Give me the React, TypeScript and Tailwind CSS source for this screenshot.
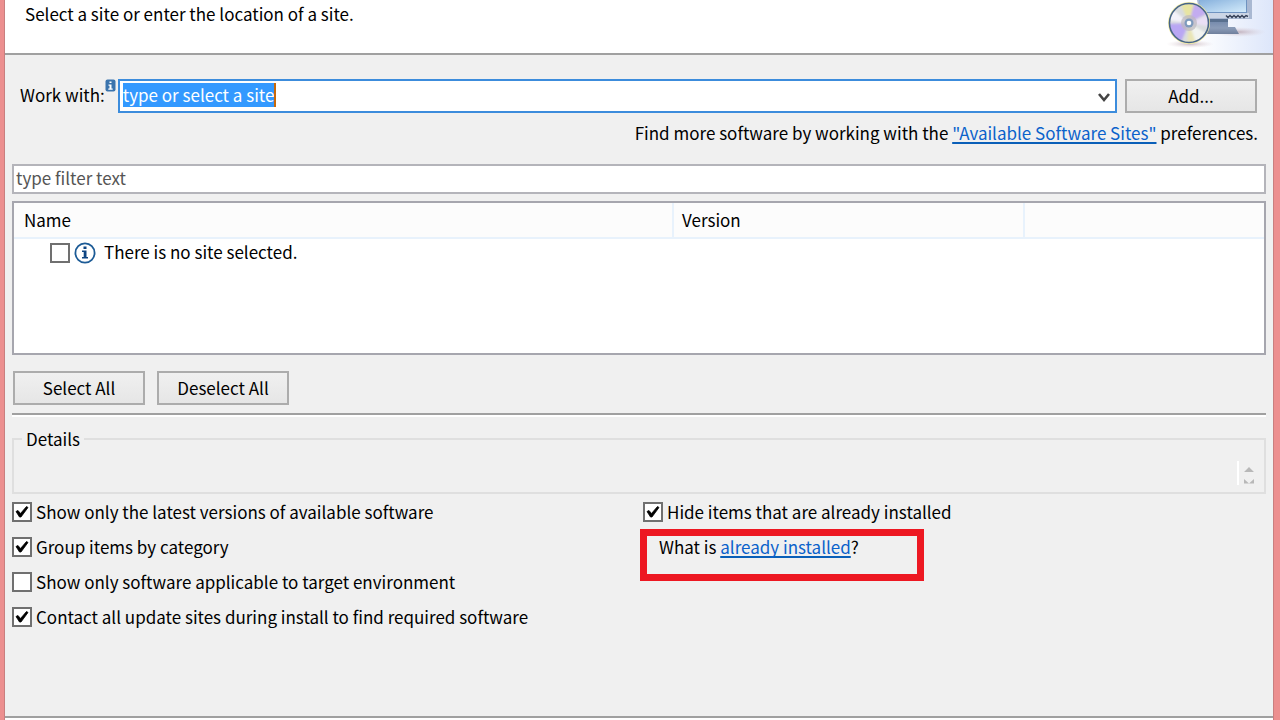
import { useEffect, useRef, useState } from "react";

interface CheckOptionProps {
  id: string;
  label: string;
  defaultChecked?: boolean;
}

const CheckBox = ({ id, defaultChecked = false, label }: CheckOptionProps) => {
  const [checked, setChecked] = useState(defaultChecked);

  return (
    <span className="relative flex h-5 w-5 shrink-0">
      <input
        id={id}
        type="checkbox"
        aria-label={label}
        checked={checked}
        onChange={(e) => setChecked(e.target.checked)}
        className="h-5 w-5 appearance-none border-2 border-[#707070] bg-white"
      />
      {checked && (
        <svg viewBox="0 0 20 20" className="pointer-events-none absolute inset-0 h-5 w-5">
          <path d="M4 9.5 L6 8.5 L8.5 11.5 L14.5 4.5 L16 5.5 L9 15 L7.5 15 Z" fill="#000" stroke="#000" strokeWidth="0.8" />
        </svg>
      )}
    </span>
  );
};

const CheckOption = (props: CheckOptionProps) => (
  <div className="flex h-[35px] items-center gap-1">
    <CheckBox {...props} />
    <label htmlFor={props.id}>{props.label}</label>
  </div>
);

const PushButton = ({ children }: { children: string }) => (
  <button
    type="button"
    className="h-[34px] w-[132px] shrink-0 border-2 border-[#acacac] bg-linear-to-b from-[#f0f0f0] to-[#e6e6e6] pb-px leading-6"
  >
    {children}
  </button>
);

// Disc in front of a monitor, cut off by the top of the dialog
const InstallBanner = () => (
  <svg viewBox="0 0 110 53" className="h-[53px] w-[110px]" aria-hidden="true">
    <defs>
      <linearGradient id="fade" x1="0" x2="1">
        <stop offset="0.3" stopColor="#fff" />
        <stop offset="1" stopColor="#dde6fa" />
      </linearGradient>
      <linearGradient id="screen" x1="0" y1="0" x2="1" y2="1">
        <stop offset="0" stopColor="#86b0dc" />
        <stop offset="1" stopColor="#d3ebfb" />
      </linearGradient>
      <linearGradient id="stand" x1="0" x2="0" y1="0" y2="1">
        <stop offset="0" stopColor="#6d84a8" />
        <stop offset="0.6" stopColor="#8b9cb8" />
        <stop offset="1" stopColor="#6f7f9c" />
      </linearGradient>
      <radialGradient id="shadow">
        <stop offset="0" stopColor="#a98c98" stopOpacity="0.6" />
        <stop offset="1" stopColor="#d8c8d0" stopOpacity="0" />
      </radialGradient>
      <filter id="soft">
        <feGaussianBlur stdDeviation="1.3" />
      </filter>
      <clipPath id="discClip">
        <circle cx="26" cy="23" r="19" />
      </clipPath>
    </defs>
    <rect width="110" height="53" fill="url(#fade)" />
    <ellipse cx="76" cy="32" rx="27" ry="5" fill="url(#shadow)" />
    <ellipse cx="27" cy="44" rx="24" ry="4" fill="url(#shadow)" />
    <path d="M34 0 H89 V19 H38 Z" fill="#a9b8d2" />
    <path d="M36 0 H84 V13 H39 Z" fill="#6f93c0" />
    <path d="M36 0 H83 V12 H39 Z" fill="url(#screen)" />
    <path d="M38 13 H86 V18 H40 Z" fill="#ccd6e6" />
    <path d="M63 15.5 l2 2 2-2 2 2 2-2 2 2 2-2 2 2 2-2 2 2 2-2 2 1" fill="none" stroke="#36425a" strokeWidth="1.4" />
    <path d="M45 19 H65 V27 H72 L76 34 H43 Z" fill="url(#stand)" />
    <path d="M45 19 H65 V22 H45 Z" fill="#59708f" />
    <circle cx="26" cy="23" r="21" fill="#f1eca4" />
    <g clipPath="url(#discClip)">
      <circle cx="26" cy="23" r="20" fill="#d9dcde" />
      <g filter="url(#soft)">
        <path d="M26 23 L16 0 L32 0 Z" fill="#e8e5a2" />
        <path d="M26 23 L32 0 L50 10 Z" fill="#c3acf0" />
        <path d="M26 23 L50 13 L50 27 Z" fill="#e9dff5" />
        <path d="M26 23 L48 36 L32 46 Z" fill="#f2f4f0" />
        <path d="M26 23 L24 46 L34 46 Z" fill="#e9e5b6" />
        <path d="M26 23 L3 24 L7 38 L18 42 Z" fill="#b9a7f3" />
        <path d="M26 23 L4 20 L8 8 Z" fill="#f4f2fa" />
      </g>
    </g>
    <circle cx="26" cy="23" r="19.5" fill="none" stroke="#476489" strokeWidth="1.6" />
    <circle cx="26" cy="23" r="8" fill="#bcb8bf" fillOpacity="0.7" />
    <circle cx="26" cy="23" r="4.5" fill="#7e9abd" />
    <circle cx="26" cy="23" r="2.3" fill="#fff" />
  </svg>
);

const InfoIcon = () => (
  <svg viewBox="0 0 22 22" className="h-[22px] w-[22px]" aria-hidden="true">
    <circle cx="11" cy="11" r="9.6" fill="#fff" stroke="#1c5b96" strokeWidth="1.8" />
    <path d="M9.5 4.5 h3 v2.5 h-3 Z M8 8.5 h4.5 v6.5 h1.5 v1.5 h-6 v-1.5 h1.7 v-5 h-1.7 Z" fill="#0d4583" />
  </svg>
);

const InfoBadge = () => (
  <svg viewBox="0 0 11 13" className="h-[13px] w-[11px]" aria-hidden="true">
    <rect x="0.5" y="0.5" width="10" height="12" rx="2" fill="#3b74ad" />
    <path d="M4.5 2.5 h2 v1.6 h-2 Z M3.5 5.5 h3 v4 h1.2 v1.2 h-4.4 v-1.2 h1.2 v-2.8 h-1 Z" fill="#fff" />
  </svg>
);

const options = [
  { id: "latest", label: "Show only the latest versions of available software", defaultChecked: true },
  { id: "group", label: "Group items by category", defaultChecked: true },
  { id: "target", label: "Show only software applicable to target environment" },
  { id: "contact", label: "Contact all update sites during install to find required software", defaultChecked: true },
];

const linkClass =
  "text-[#0b62cb] underline decoration-[#0a5fb8] decoration-2 underline-offset-2 [text-decoration-skip-ink:none]";

const App = () => {
  const siteRef = useRef<HTMLInputElement>(null);

  useEffect(() => {
    siteRef.current?.focus();
    siteRef.current?.select();
  }, []);

  return (
    <div className="flex min-h-screen bg-[#ec8f8f] pr-[6px] pl-1 font-['Noto_Sans_CJK_KR',sans-serif] text-[17px] leading-6 text-black">
      <div className="flex flex-1 flex-col border-x border-[#c97f7f] bg-[#f0f0f0]">
        {/* Banner */}
        <header className="flex h-[55px] items-start justify-between border-b-2 border-[#a0a0a0] bg-white pl-5">
          <p className="pt-[2px]">Select a site or enter the location of a site.</p>
          <InstallBanner />
        </header>

        <main className="flex flex-1 flex-col px-[7px] pt-6">
          {/* Site selection */}
          <div className="flex h-[34px] pr-[9px] pl-2">
            <label htmlFor="site" className="pt-1">
              Work with:
            </label>
            <InfoBadge />
            <div className="ml-[2px] flex flex-1 items-start justify-between border-2 border-[#3c8cdc] bg-white pt-[2px] pl-[3px]">
              <div className="flex">
                <input
                  id="site"
                  ref={siteRef}
                  defaultValue="type or select a site"
                  className="field-sizing-content h-6 leading-6 outline-none selection:bg-[#3399ff] selection:text-white"
                />
                <span className="h-6 w-[2px] shrink-0 bg-[#c8690a]" />
              </div>
              <button type="button" aria-label="Show sites" className="flex h-[30px] w-[17px] items-center">
                <svg viewBox="0 0 12 10" className="h-[10px] w-3">
                  <path d="M1 1 L6 7 L11 1" fill="none" stroke="#444" strokeWidth="2.6" />
                </svg>
              </button>
            </div>
            <div className="ml-2 flex">
              <PushButton>Add...</PushButton>
            </div>
          </div>
          <p className="mt-2 h-[43px] pr-2 text-right">
            Find more software by working with the{" "}
            <a href="#sites" className={linkClass}>
              "Available Software Sites"
            </a>{" "}
            preferences.
          </p>

          {/* Software list */}
          <input
            aria-label="Filter"
            placeholder="type filter text"
            className="h-[30px] border-2 border-[#b4b4ba] bg-white px-[2px] pb-1 outline-none placeholder:text-[#555]"
          />
          <div className="mt-[7px] h-[154px] border-2 border-[#a6a6ae] bg-white">
            <table className="w-full table-fixed border-collapse text-left">
              <thead>
                <tr className="h-[35px] border-b-2 border-[#e8f2fc] bg-[#fcfcfc]">
                  <th className="w-[659px] border-r-2 border-[#e8f2fc] pl-[10px] font-normal">Name</th>
                  <th className="w-[351px] border-r-2 border-[#e8f2fc] pl-2 font-normal">Version</th>
                  <th />
                </tr>
              </thead>
              <tbody>
                <tr>
                  <td colSpan={3}>
                    <div className="flex items-center gap-1 pt-px pl-9">
                      <CheckBox id="no-site" label="There is no site selected." />
                      <InfoIcon />
                      <label htmlFor="no-site" className="pb-[2px] pl-1">
                        There is no site selected.
                      </label>
                    </div>
                  </td>
                </tr>
              </tbody>
            </table>
          </div>
          <div className="mt-4 flex gap-3 pl-px">
            <PushButton>Select All</PushButton>
            <PushButton>Deselect All</PushButton>
          </div>
          <hr className="mt-2 h-1 border-t-2 border-b-2 border-t-[#a0a0a0] border-b-white" />

          {/* Details */}
          <fieldset className="mt-[10px] h-[67px] border-2 border-[#dfdfdf] pl-2">
            <legend className="px-1">Details</legend>
            <div className="flex justify-end gap-1 pt-[10px] pr-[9px]">
              <span className="h-6 w-[2px] bg-white" />
              <svg viewBox="0 0 12 24" className="h-6 w-3" aria-hidden="true">
                <path d="M1 11 L6 6 L11 11 Z M1 18 L6 22.5 H1 Z M11 18 L6 22.5 H11 Z" fill="#b8b8b8" />
              </svg>
            </div>
          </fieldset>

          {/* Install options */}
          <div className="grid grid-cols-2 gap-x-2">
            <div>
              {options.map((option) => (
                <CheckOption key={option.id} {...option} />
              ))}
            </div>
            <div>
              <CheckOption id="hide" label="Hide items that are already installed" defaultChecked />
              <div className="relative h-[35px] pt-[6px] pl-4">
                What is{" "}
                <a href="#installed" className={linkClass}>
                  already installed
                </a>
                ?
                <div className="pointer-events-none absolute top-0 -left-[3px] h-[52px] w-[284px] border-7 border-[#ed1822]" />
              </div>
            </div>
          </div>
        </main>
        <hr className="h-1 border-t-2 border-b-2 border-t-[#a0a0a0] border-b-white" />
      </div>
    </div>
  );
};

export default App;
